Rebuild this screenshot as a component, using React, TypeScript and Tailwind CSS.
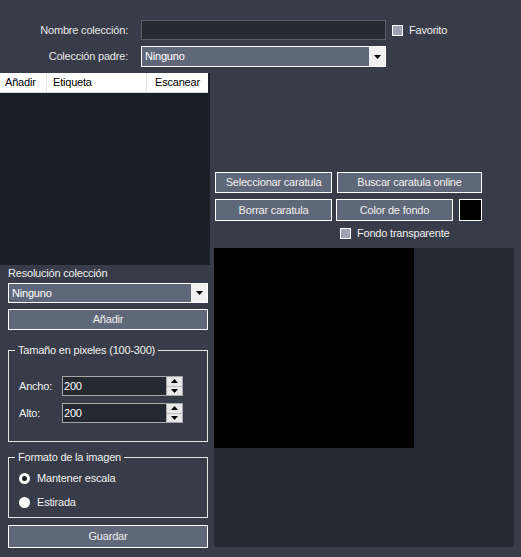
function Arrow({ up }: { up?: boolean }) {
  return (
    <svg width="7" height="4" viewBox="0 0 7 4">
      <polygon points={up ? "3.5,0 7,4 0,4" : "0,0 7,0 3.5,4"} fill="#000" />
    </svg>
  );
}

function Select({ value }: { value: string }) {
  return (
    <div className="flex h-full w-full border border-white bg-[#5f6878]">
      <div className="flex-1 flex items-center pl-[3px] text-white">{value}</div>
      <div className="w-[16px] bg-[#f0f0f0] flex items-center justify-center">
        <Arrow />
      </div>
    </div>
  );
}

function Button({ label, className }: { label: string; className?: string }) {
  return (
    <div
      className={
        "flex items-center justify-center border border-white bg-[#5f6878] text-[#f0f0f0] " +
        (className ?? "")
      }
    >
      {label}
    </div>
  );
}

function Check({ label }: { label: string }) {
  return (
    <div className="flex items-center gap-[6px]">
      <div className="w-[11px] h-[11px] border border-white bg-[#9ea3b3]" />
      <span className="text-[#f0f0f0]">{label}</span>
    </div>
  );
}

function Spin({ value }: { value: string }) {
  return (
    <div className="flex w-[121px] h-[20px] border border-[#a8a8a8] bg-[#252932]">
      <div className="flex-1 flex items-center pl-[1px] text-white">{value}</div>
      <div className="w-[16px] flex flex-col bg-[#e8e8e8] border-l border-[#a8a8a8]">
        <div className="flex-1 flex items-center justify-center border-b border-[#c0c0c0]">
          <Arrow up />
        </div>
        <div className="flex-1 flex items-center justify-center">
          <Arrow />
        </div>
      </div>
    </div>
  );
}

function Group({ title, className, children }: { title: string; className?: string; children: React.ReactNode }) {
  return (
    <div className={"relative border border-[#e6e6e6] " + (className ?? "")}>
      <span className="absolute -top-[8px] left-[6px] px-[3px] bg-[#373c48] text-[#f0f0f0] leading-[14px]">
        {title}
      </span>
      {children}
    </div>
  );
}

export default function App() {
  return (
    <div className="w-[521px] h-[557px] bg-[#373c48] text-[11px] tracking-[-0.2px] text-[#f0f0f0] font-['Liberation_Sans',Arial,sans-serif] flex flex-col overflow-hidden">
      {/* Header fields */}
      <div className="pt-[20px] flex flex-col gap-[6px]">
        <div className="flex items-center h-[20px]">
          <div className="w-[128px] text-right text-[#e8e8e8]">Nombre colección:</div>
          <div className="ml-[13px] w-[245px] h-[20px] border border-[#5c6066] bg-[#252932]" />
          <div className="ml-[6px]">
            <Check label="Favorito" />
          </div>
        </div>
        <div className="flex items-center h-[21px]">
          <div className="w-[128px] text-right text-[#e8e8e8]">Colección padre:</div>
          <div className="ml-[13px] w-[245px] h-[21px]">
            <Select value="Ninguno" />
          </div>
        </div>
      </div>

      <div className="mt-[6px] flex flex-1">
        {/* Left column */}
        <div className="w-[214px] flex flex-col">
          <div className="w-[210px] h-[192px] bg-[#1b1f27] flex flex-col">
            <div className="w-[208px] h-[20px] bg-white border-b border-[#d8d8d8] flex text-black">
              <div className="w-[47px] pl-[5px] flex items-center border-r border-[#e5e5e5]">Añadir</div>
              <div className="w-[100px] pl-[6px] flex items-center border-r border-[#e5e5e5]">Etiqueta</div>
              <div className="flex-1 pl-[8px] flex items-center">Escanear</div>
            </div>
          </div>

          <div className="px-[8px] flex flex-col">
            <div className="h-[14px] mt-[1px] flex items-center">Resolución colección</div>
            <div className="h-[20px] mt-[3px] w-[200px]">
              <Select value="Ninguno" />
            </div>
            <Button label="Añadir" className="h-[21px] mt-[6px] w-[200px]" />

            <Group title="Tamaño en pixeles (100-300)" className="mt-[20px] w-[200px] h-[92px]">
              <div className="pt-[25px] pl-[10px] flex flex-col gap-[7px]">
                <div className="flex items-center">
                  <span className="w-[43px]">Ancho:</span>
                  <Spin value="200" />
                </div>
                <div className="flex items-center">
                  <span className="w-[43px]">Alto:</span>
                  <Spin value="200" />
                </div>
              </div>
            </Group>

            <Group title="Formato de la imagen" className="mt-[15px] w-[200px] h-[61px]">
              <div className="pt-[15px] pl-[10px] flex flex-col gap-[13px]">
                <div className="flex items-center gap-[7px] h-[11px]">
                  <div className="w-[11px] h-[11px] rounded-full border-[3px] border-white bg-[#1b1f27]" />
                  <span>Mantener escala</span>
                </div>
                <div className="flex items-center gap-[7px] h-[11px]">
                  <div className="w-[11px] h-[11px] rounded-full bg-white" />
                  <span>Estirada</span>
                </div>
              </div>
            </Group>

            <Button label="Guardar" className="mt-[7px] h-[23px] w-[200px]" />
          </div>
        </div>

        {/* Right column */}
        <div className="flex flex-col">
          <div className="mt-[99px] ml-[1px] flex gap-[5px] h-[21px]">
            <Button label="Seleccionar caratula" className="w-[117px]" />
            <Button label="Buscar caratula online" className="w-[145px]" />
          </div>
          <div className="mt-[6px] ml-[1px] flex h-[22px]">
            <Button label="Borrar caratula" className="w-[117px]" />
            <Button label="Color de fondo" className="w-[117px] ml-[4px]" />
            <div className="w-[23px] ml-[6px] border border-white bg-black" />
          </div>
          <div className="mt-[5px] h-[14px] ml-[126px] flex items-center">
            <Check label="Fondo transparente" />
          </div>
          <div className="mt-[8px] w-[300px] h-[299px] bg-[#252932]">
            <div className="w-[200px] h-[200px] bg-black" />
          </div>
        </div>
      </div>
    </div>
  );
}
